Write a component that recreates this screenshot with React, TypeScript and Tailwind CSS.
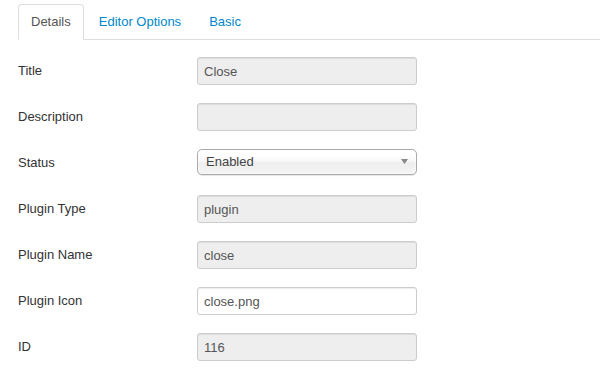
import { useState } from "react";

const tabs = ["Details", "Editor Options", "Basic"];

interface Field {
  label: string;
  value: string;
  kind: "readonly" | "text" | "select";
}

const fields: Field[] = [
  { label: "Title", value: "Close", kind: "readonly" },
  { label: "Description", value: "", kind: "readonly" },
  { label: "Status", value: "Enabled", kind: "select" },
  { label: "Plugin Type", value: "plugin", kind: "readonly" },
  { label: "Plugin Name", value: "close", kind: "readonly" },
  { label: "Plugin Icon", value: "close.png", kind: "text" },
  { label: "ID", value: "116", kind: "readonly" },
];

export default function App() {
  const [active, setActive] = useState(0);

  return (
    <div className="min-h-screen w-full bg-white pt-[4px] pl-[18px] text-[13px] text-[#333] [font-family:'Liberation_Sans',Arial,sans-serif]">
      {/* Tabs */}
      <ul className="flex border-b border-[#ddd]">
        {tabs.map((t, i) => (
          <li key={t} className="-mb-px mr-[2px]">
            <button
              onClick={() => setActive(i)}
              className={
                i === active
                  ? "block rounded-t-[4px] border border-[#ddd] border-b-transparent bg-white px-3 py-2 leading-[18px] text-[#555]"
                  : "block rounded-t-[4px] border border-transparent px-3 py-2 leading-[18px] text-[#0088cc] hover:bg-[#eee]"
              }
            >
              {t}
            </button>
          </li>
        ))}
      </ul>

      {/* Form */}
      <div className="mt-[17px]">
        {fields.map((f) => (
          <div key={f.label} className="mb-[18px] flex items-start">
            <label className="flex h-[28px] w-[179px] items-center leading-[18px]">
              {f.label}
            </label>
            {f.kind === "select" ? (
              <div className="relative flex h-[26px] w-[220px] items-center rounded-[5px] border border-[#aaa] bg-[linear-gradient(#fff_20%,#f6f6f6_50%,#eee_52%,#f4f4f4_100%)] pl-[8px] text-[#444] shadow-[inset_0_0_3px_#fff,0_1px_1px_rgba(0,0,0,0.1)]">
                <span className="leading-[18px]">{f.value}</span>
                <svg
                  className="absolute right-[8px] top-[9px]"
                  width="7"
                  height="5"
                  viewBox="0 0 7 5"
                >
                  <path d="M0 0h7L3.5 5z" fill="#888" />
                </svg>
              </div>
            ) : (
              <input
                readOnly={f.kind === "readonly"}
                defaultValue={f.value}
                className={
                  "h-[28px] w-[220px] rounded-[3px] border border-[#ccc] px-[6px] text-[13px] leading-[18px] text-[#555] shadow-[inset_0_1px_1px_rgba(0,0,0,0.075)] outline-none " +
                  (f.kind === "readonly" ? "bg-[#eee]" : "bg-white")
                }
              />
            )}
          </div>
        ))}
      </div>
    </div>
  );
}
